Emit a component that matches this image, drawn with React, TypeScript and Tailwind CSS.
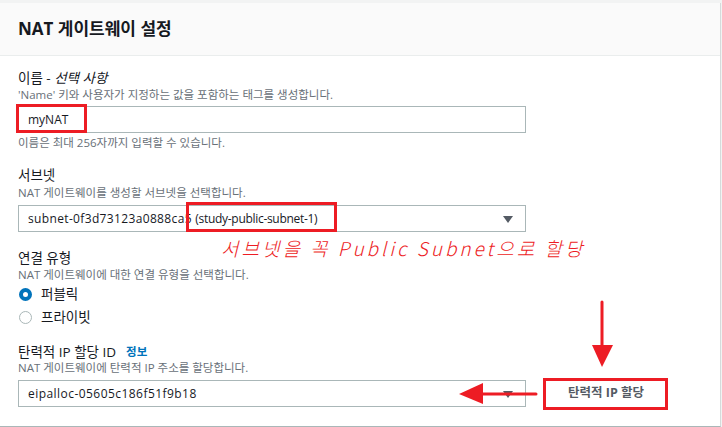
import React from "react";

const Caret = () => (
  <svg width="10" height="7" viewBox="0 0 10 7" className="absolute right-[12px] top-[10px]">
    <path d="M0 0 L10 0 L5 7 Z" fill="#545b64" />
  </svg>
);

const Label = ({ children, className = "" }: { children: React.ReactNode; className?: string }) => (
  <div className={`text-[13.5px] leading-[18px] text-[#16191f] ${className}`}>{children}</div>
);

const Desc = ({ children, className = "" }: { children: React.ReactNode; className?: string }) => (
  <div className={`text-[11.5px] leading-[14px] text-[#687078] ${className}`}>{children}</div>
);

export default function App() {
  return (
    <div className="relative w-[722px] h-[427px] bg-[#f2f3f3] pt-[3px] font-['Open_Sans','Noto_Sans_CJK_KR',sans-serif] overflow-hidden">
      <div className="w-[721px] bg-white border-r border-r-[#d5dbdb] border-b border-b-[#aab7b8]">
        <div className="h-[53px] bg-[#fafafa] border-b border-b-[#eaeded] flex items-center pl-[18px] pb-[1px]">
          <h2 className="text-[17px] font-bold text-[#16191f]">NAT 게이트웨이 설정</h2>
        </div>
        <div className="pl-[18px] pb-[19px]">
          <Label className="pt-[13px]">
            이름 - <i>선택 사항</i>
          </Label>
          <Desc className="mt-[1px]">'Name' 키와 사용자가 지정하는 값을 포함하는 태그를 생성합니다.</Desc>
          <div className="mt-[4px] w-[508px] h-[27px] border border-[#aab7b8] flex items-center pl-[9px] text-[12px] text-[#16191f]">
            myNAT
          </div>
          <Desc className="mt-[3px]">이름은 최대 256자까지 입력할 수 있습니다.</Desc>

          <Label className="mt-[16px]">서브넷</Label>
          <Desc className="mt-[2px]">NAT 게이트웨이를 생성할 서브넷을 선택합니다.</Desc>
          <div className="relative mt-[5px] w-[508px] h-[27px] border border-[#aab7b8] flex items-center pl-[9px] text-[12px] text-[#16191f] whitespace-pre">
            <span className="tracking-[0.35px]">subnet-0f3d73123a0888ca5 </span>
            <span className="tracking-[-0.3px]">(study-public-subnet-1)</span>
            <Caret />
          </div>

          <Label className="mt-[17px]">연결 유형</Label>
          <Desc className="mt-[1px]">NAT 게이트웨이에 대한 연결 유형을 선택합니다.</Desc>
          <div className="mt-[2px] h-[20px] flex items-center gap-[9px]">
            <span className="w-[13px] h-[13px] rounded-full border-[4px] border-[#0073bb] bg-white ml-[1px]" />
            <span className="text-[13.5px] text-[#16191f]">퍼블릭</span>
          </div>
          <div className="mt-[3px] h-[20px] flex items-center gap-[9px]">
            <span className="w-[13px] h-[13px] rounded-full border border-[#aab7b8] bg-white ml-[1px]" />
            <span className="text-[13.5px] text-[#16191f]">프라이빗</span>
          </div>

          <Label className="mt-[16px] flex items-center gap-[10px]">
            <span>탄력적 IP 할당 ID</span>
            <span className="text-[11.5px] font-bold text-[#0073bb]">정보</span>
          </Label>
          <Desc>NAT 게이트웨이에 탄력적 IP 주소를 할당합니다.</Desc>
          <div className="flex items-center mt-[5px]">
            <div className="relative w-[508px] h-[27px] border border-[#aab7b8] flex items-center pl-[9px] text-[12px] text-[#16191f] tracking-[0.45px]">
              eipalloc-05605c186f51f9b18
              <Caret />
            </div>
            <button className="ml-[19px] w-[122px] h-[27px] bg-white text-[12.5px] font-bold text-[#545b64] flex items-center justify-center">
              탄력적 IP 할당
            </button>
          </div>
        </div>
      </div>

      {/* annotations */}
      <div className="absolute left-[16px] top-[104px] w-[71px] h-[29px] border-[3px] border-[#ed1c24]" />
      <div className="absolute left-[186px] top-[202px] w-[151px] h-[30px] border-[3px] border-[#ed1c24]" />
      <div className="absolute left-[543px] top-[378px] w-[125px] h-[32px] border-[3px] border-[#ed1c24]" />
      <div className="absolute left-[221px] top-[235px] text-[19px] leading-[26px] text-[#ed1c24] italic font-light tracking-[3px] font-['Noto_Sans_CJK_KR',sans-serif] whitespace-nowrap">
        서브넷을 꼭 Public Subnet으로 할당
      </div>
      <svg className="absolute left-[590px] top-[300px]" width="26" height="70" viewBox="0 0 26 70">
        <line x1="12" y1="2" x2="12" y2="48" stroke="#ed1c24" strokeWidth="3" strokeLinecap="round" />
        <path d="M2 45 L23 45 L12 67 Z" fill="#ed1c24" />
      </svg>
      <svg className="absolute left-[456px] top-[381px]" width="84" height="26" viewBox="0 0 84 26">
        <line x1="22" y1="13" x2="80" y2="13" stroke="#ed1c24" strokeWidth="3" strokeLinecap="round" />
        <path d="M3 13 L27 2 L27 23 Z" fill="#ed1c24" />
      </svg>
    </div>
  );
}
